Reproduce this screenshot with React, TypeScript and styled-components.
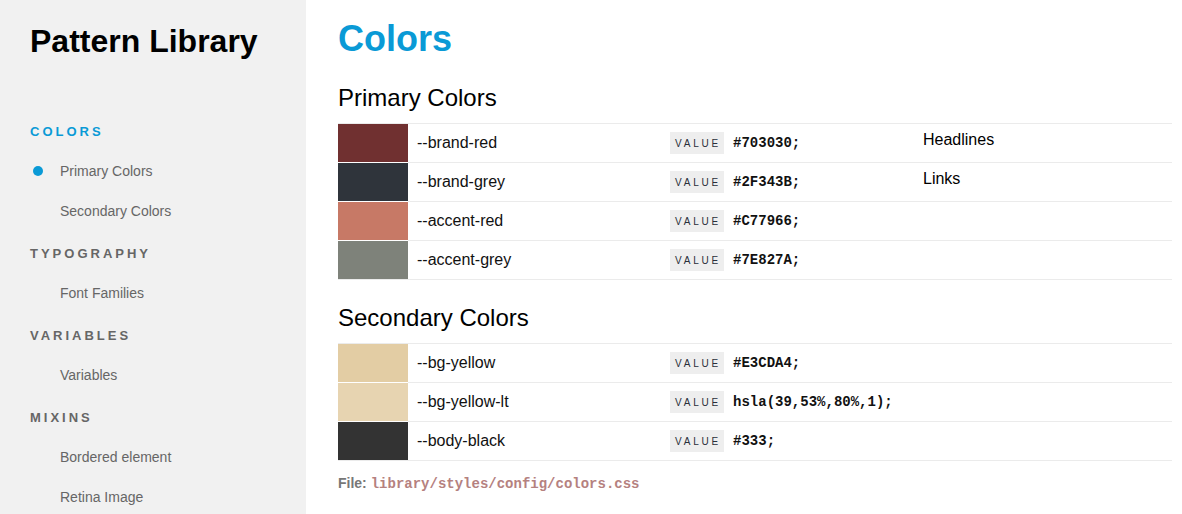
import styled, { createGlobalStyle } from "styled-components";

interface ColorVar {
    name: string,
    value: string,
    swatch: string,
    usage?: string
}

const primary: ColorVar[] = [
    { name: '--brand-red', value: '#703030;', swatch: '#703030', usage: 'Headlines' },
    { name: '--brand-grey', value: '#2F343B;', swatch: '#2F343B', usage: 'Links' },
    { name: '--accent-red', value: '#C77966;', swatch: '#C77966' },
    { name: '--accent-grey', value: '#7E827A;', swatch: '#7E827A' }
]

const secondary: ColorVar[] = [
    { name: '--bg-yellow', value: '#E3CDA4;', swatch: '#E3CDA4' },
    { name: '--bg-yellow-lt', value: 'hsla(39,53%,80%,1);', swatch: 'hsla(39,53%,80%,1)' },
    { name: '--body-black', value: '#333;', swatch: '#333' }
]

const nav = [
    { title: 'Colors', items: ['Primary Colors', 'Secondary Colors'] },
    { title: 'Typography', items: ['Font Families'] },
    { title: 'Variables', items: ['Variables'] },
    { title: 'Mixins', items: ['Bordered element', 'Retina Image'] }
]

const ColorTable = ({ rows }: { rows: ColorVar[] }) => (
    <Table>
        {rows.map((row) => (
            <Row key={row.name}>
                <Swatch $color={row.swatch} />
                <Name>{row.name}</Name>
                <ValueCell>
                    <ValueTag>Value</ValueTag>
                    <Code>{row.value}</Code>
                </ValueCell>
                <Usage>{row.usage}</Usage>
            </Row>
        ))}
    </Table>
)

const App = () => {
    return (
        <>
            <GlobalStyle />
            <Layout>
                <Sidebar>
                    <Brand>Pattern Library</Brand>
                    <Nav>
                        {nav.map((group, g) => (
                            <Group key={group.title}>
                                <GroupTitle $active={g === 0}>{group.title}</GroupTitle>
                                {group.items.map((item, i) => (
                                    <NavItem key={item} $active={g === 0 && i === 0}>{item}</NavItem>
                                ))}
                            </Group>
                        ))}
                    </Nav>
                </Sidebar>
                <Main>
                    <PageTitle>Colors</PageTitle>
                    <Section>
                        <SectionTitle>Primary Colors</SectionTitle>
                        <ColorTable rows={primary} />
                    </Section>
                    <Section>
                        <SectionTitle>Secondary Colors</SectionTitle>
                        <ColorTable rows={secondary} />
                    </Section>
                    <FileNote>
                        <strong>File:</strong> <FilePath>library/styles/config/colors.css</FilePath>
                    </FileNote>
                </Main>
            </Layout>
        </>
    )
}

export default App;

const GlobalStyle = createGlobalStyle`
    html, body {
        margin: 0;
        padding: 0;
        background: #fff;
        font-family: "Liberation Sans", Arial, sans-serif;
        color: #111;
    }
`

const Layout = styled.div`
    display: flex;
    min-height: 100vh;
`

const Sidebar = styled.aside`
    width: 306px;
    flex-shrink: 0;
    background-color: #f1f1f1;
    padding: 21px 0 0 30px;
    box-sizing: border-box;
`

const Brand = styled.h1`
    margin: 0;
    font-size: 32px;
    line-height: 40px;
    font-weight: 700;
    color: #000;
`

const Nav = styled.nav`
    margin-top: 51px;
    display: flex;
    flex-direction: column;
    gap: 2px;
`

const Group = styled.div`
    display: flex;
    flex-direction: column;
`

const GroupTitle = styled.div<{ $active?: boolean }>`
    font-size: 13px;
    line-height: 40px;
    font-weight: 700;
    letter-spacing: 3px;
    text-transform: uppercase;
    color: ${({ $active }) => ($active ? '#0a9ad6' : '#666')};
`

const NavItem = styled.div<{ $active?: boolean }>`
    position: relative;
    height: 40px;
    padding-left: 30px;
    font-size: 14px;
    line-height: 38px;
    color: #666;

    &::before {
        content: '';
        display: ${({ $active }) => ($active ? 'block' : 'none')};
        position: absolute;
        left: 3px;
        top: 14px;
        width: 10px;
        height: 10px;
        border-radius: 50%;
        background-color: #0a9ad6;
    }
`

const Main = styled.main`
    flex: 1;
    padding: 18px 10px 0 32px;
    display: flex;
    flex-direction: column;
`

const PageTitle = styled.h1`
    margin: 0;
    font-size: 36px;
    line-height: 42px;
    font-weight: 700;
    color: #0a9ad6;
`

const Section = styled.section`
    margin-top: 23px;
`

const SectionTitle = styled.h2`
    margin: 0 0 10px;
    font-size: 24px;
    line-height: 30px;
    font-weight: 400;
    color: #000;
`

const Table = styled.div`
    display: flex;
    flex-direction: column;
    border-bottom: 1px solid #ebebeb;
`

const Row = styled.div`
    display: grid;
    grid-template-columns: 70px 262px 253px 1fr;
    height: 39px;
    box-sizing: border-box;
    border-top: 1px solid #ebebeb;
`

const Swatch = styled.div<{ $color: string }>`
    background-color: ${({ $color }) => $color};
    ${Row} + ${Row} & {
        margin-top: -1px;
        border-top: 1px solid #fff;
    }
`

const Name = styled.div`
    display: flex;
    align-items: center;
    padding-left: 9px;
    font-size: 16px;
    color: #111;
`

const ValueTag = styled.span`
    display: inline-flex;
    align-items: center;
    height: 22px;
    padding: 0 3px 0 5px;
    background-color: #eeeeee;
    font-size: 10px;
    letter-spacing: 2.8px;
    text-transform: uppercase;
    color: #2a2f3a;
`

const ValueCell = styled.div`
    display: flex;
    align-items: center;
    gap: 9px;
`

const Code = styled.code`
    font-family: "Liberation Mono", "Courier New", monospace;
    font-size: 14px;
    font-weight: 700;
    color: #111;
`

const Usage = styled.div`
    padding-top: 6px;
    font-size: 16px;
    line-height: 20px;
    color: #000;
`

const FileNote = styled.div`
    margin-top: 13px;
    font-size: 14px;
    line-height: 18px;
    color: #777;
`

const FilePath = styled.code`
    font-family: "Liberation Mono", "Courier New", monospace;
    font-size: 14px;
    font-weight: 700;
    color: #b5817f;
`
